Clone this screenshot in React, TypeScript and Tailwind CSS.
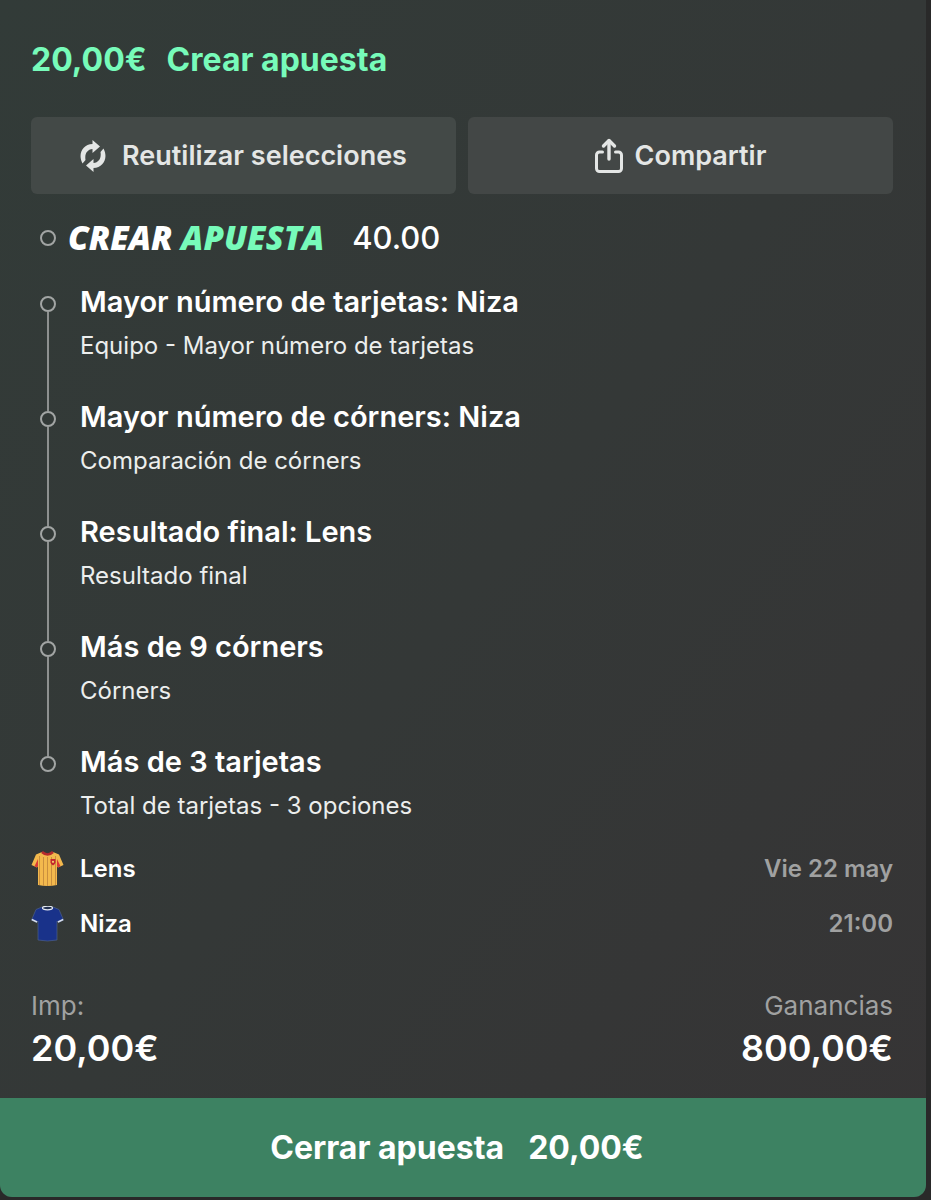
interface Selection {
    title: string;
    market: string;
}

const selections: Selection[] = [
    { title: "Mayor número de tarjetas: Niza", market: "Equipo - Mayor número de tarjetas" },
    { title: "Mayor número de córners: Niza", market: "Comparación de córners" },
    { title: "Resultado final: Lens", market: "Resultado final" },
    { title: "Más de 9 córners", market: "Córners" },
    { title: "Más de 3 tarjetas", market: "Total de tarjetas - 3 opciones" },
];

function ReuseIcon() {
    return (
        <svg viewBox="0 0 26 34" className="h-[34px] w-[26px] shrink-0" fill="currentColor" aria-hidden="true">
            <path d="M12.5 1L20 7.5L12.5 14V10C7 10.5 4.500 15 5.500 21L2.500 24.500C-2.500 15 2.500 5.500 12.5 5Z" />
            <path d="M13.500 33L6 26.500L13.500 20V24C19 23.500 21.500 19 20.500 13L23.500 9.500C28.500 19 23.500 28.500 13.500 29Z" />
        </svg>
    );
}

function ShareIcon() {
    return (
        <svg
            viewBox="0 0 28 36"
            className="h-9 w-7 shrink-0"
            fill="none"
            stroke="currentColor"
            strokeWidth="3"
            strokeLinecap="round"
            strokeLinejoin="round"
            aria-hidden="true"
        >
            <path d="M7.5 14H4.5A3 3 0 0 0 1.5 17V30.500A3 3 0 0 0 4.500 33.5H23.5A3 3 0 0 0 26.500 30.500V17A3 3 0 0 0 23.5 14H20.5" />
            <path d="M14 21V3" strokeWidth="3.400" />
            <path d="M8.500 8L14 2.500L19.500 8" strokeWidth="3.400" />
        </svg>
    );
}

function LensShirt() {
    return (
        <svg viewBox="0 0 33 36" className="h-9 w-[33px]" aria-hidden="true">
            <path d="M11 1L5 3.500L0.500 14L6 16.500L7 15V34Q16.500 36 26 34V15L27 16.500L32.500 14L28 3.500L22 1Q16.500 5 11 1Z" fill="#f3b94d" />
            <path d="M7 15V8L3.500 15.300L6 16.500Z" fill="#d83a35" />
            <path d="M26 15V8L29.500 15.300L27 16.500Z" fill="#d83a35" />
            <path d="M8.500 5V34M12.500 6V35M16.500 6V35M20.500 6V35M24.500 5V34" stroke="#c48a3c" strokeWidth="0.900" />
            <path d="M11 1Q16.500 6 22 1" fill="none" stroke="#b52b2e" strokeWidth="2.600" />
            <path d="M19.500 8H24.500V11.500Q24 13.500 22 14.500Q20 13.500 19.500 11.500Z" fill="#c4262e" />
            <circle cx="22" cy="10.800" r="1.100" fill="#f5d06a" />
        </svg>
    );
}

function NizaShirt() {
    return (
        <svg viewBox="0 0 33 36" className="h-9 w-[33px]" aria-hidden="true">
            <path
                d="M11 1L5 3.500L0.500 14L6 16.500L7 15V34Q16.500 36 26 34V15L27 16.500L32.500 14L28 3.500L22 1Q16.500 2 11 1Z"
                fill="#19328a"
                stroke="#4c5e88"
                strokeWidth="0.700"
            />
            <ellipse cx="16.500" cy="2" rx="5" ry="1.800" fill="#22304f" stroke="#e5e9f2" strokeWidth="1.300" />
            <path d="M0.800 13.500L6 16M32.200 13.500L27 16" stroke="#d5dcea" strokeWidth="1.600" />
        </svg>
    );
}

function Marker() {
    return <span className="block size-4 shrink-0 rounded-full border-2 border-[#a2a5a4]" />;
}

export default function App() {
    return (
        <div className="flex min-h-screen flex-col bg-[#292929] pr-[5px] pb-[3px] font-[Inter,sans-serif] text-white">
            <main className="flex grow flex-col rounded-b-xl bg-linear-to-br from-[#323b38] via-[#343837] to-[#363435]">
                <div className="grow pt-10 pr-[33px] pl-[31px]">
                    <h1 className="flex gap-5 text-[32px] leading-10 font-bold text-[#77fbba]">
                        <span>20,00€</span>
                        <span>Crear apuesta</span>
                    </h1>

                    <div className="mt-[37px] grid grid-cols-2 gap-3 text-[27px] leading-9 font-semibold text-[#e4e6e5]">
                        <button type="button" className="flex h-[77px] items-center justify-center gap-4 rounded-md bg-[#434947]">
                            <ReuseIcon />
                            Reutilizar selecciones
                        </button>
                        <button type="button" className="flex h-[77px] items-center justify-center gap-3 rounded-md bg-[#434746]">
                            <ShareIcon />
                            Compartir
                        </button>
                    </div>

                    <div className="mt-6 flex h-10 items-center pl-[9px]">
                        <Marker />
                        <p className="ml-3 font-['Open_Sans',sans-serif] text-[33px] leading-10 font-extrabold italic">
                            CREAR <span className="text-[#77fbba]">APUESTA</span>
                        </p>
                        <span className="ml-7 text-[31px] font-medium">40.00</span>
                    </div>

                    <ul className="mt-6">
                        {selections.map((selection) => (
                            <li key={selection.title} className="group flex h-[115px] gap-6 pl-[9px] last:h-auto">
                                <div className="flex flex-col items-center pt-[14px]">
                                    <Marker />
                                    <span className="-mb-[14px] w-[2px] grow bg-[#8d908f] group-last:hidden" />
                                </div>
                                <div>
                                    <h2 className="text-[29px] leading-10 font-semibold">{selection.title}</h2>
                                    <p className="mt-1 text-2xl leading-10 text-[#eceeed]">{selection.market}</p>
                                </div>
                            </li>
                        ))}
                    </ul>

                    <div className="mt-[25px] flex flex-col gap-[19px] text-2xl leading-9 font-semibold">
                        <div className="flex items-center gap-4">
                            <LensShirt />
                            <span>Lens</span>
                            <span className="ml-auto text-[#a0a1a1]">Vie 22 may</span>
                        </div>
                        <div className="flex items-center gap-4">
                            <NizaShirt />
                            <span>Niza</span>
                            <time className="ml-auto text-[#a0a1a1]">21:00</time>
                        </div>
                    </div>

                    <dl className="mt-[46px] flex justify-between">
                        <div>
                            <dt className="text-[26px] leading-9 text-[#a0a1a1]">Imp:</dt>
                            <dd className="mt-0.5 text-4xl leading-11 font-semibold">20,00€</dd>
                        </div>
                        <div className="text-right">
                            <dt className="text-[26px] leading-9 text-[#a0a1a1]">Ganancias</dt>
                            <dd className="mt-0.5 text-4xl leading-11 font-semibold">800,00€</dd>
                        </div>
                    </dl>
                </div>

                <button
                    type="button"
                    className="flex h-[99px] items-center justify-center gap-6 rounded-b-xl bg-[#3d8262] pr-3 text-[32px] font-bold"
                >
                    <span>Cerrar apuesta</span>
                    <span>20,00€</span>
                </button>
            </main>
        </div>
    );
}
